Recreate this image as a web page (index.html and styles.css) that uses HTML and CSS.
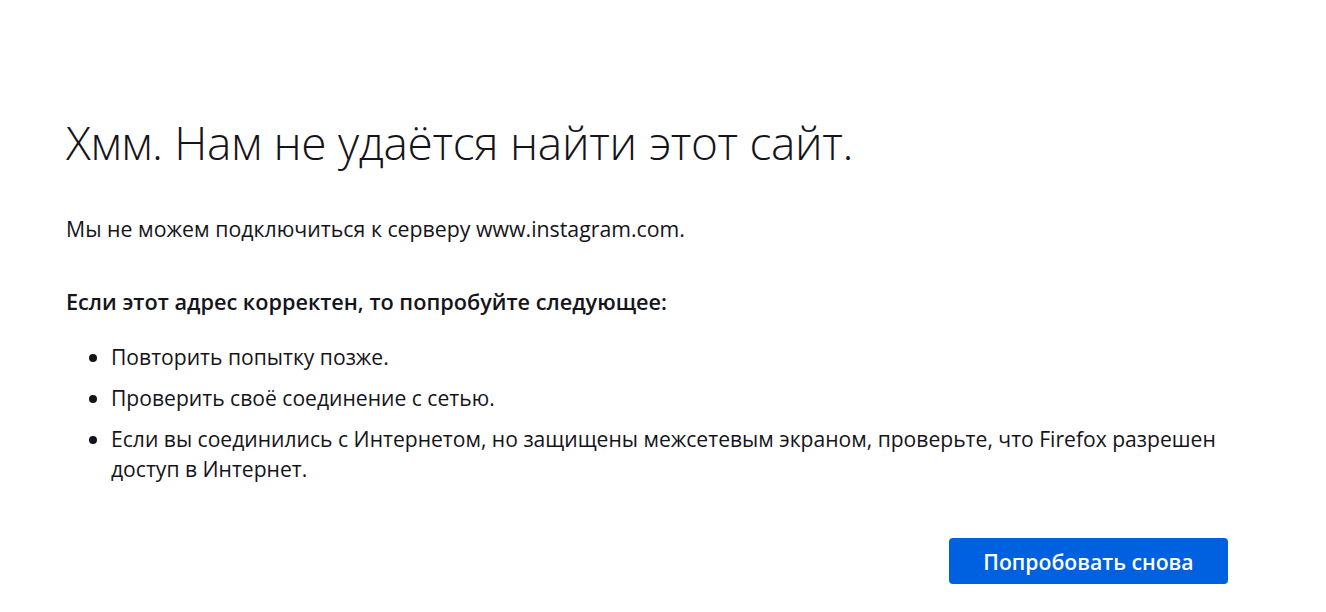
FILE: index.html
```html
<!DOCTYPE html>
<html lang="ru">
<head>
<meta charset="utf-8">
<title>Ошибка</title>
<link rel="stylesheet" href="styles.css">
</head>
<body>
<main class="container">
  <h1 class="title">Хмм. Нам не удаётся найти этот сайт.</h1>
  <p class="intro">Мы не можем подключиться к серверу www.instagram.com.</p>
  <p class="subhead">Если этот адрес корректен, то попробуйте следующее:</p>
  <ul class="tips">
    <li>Повторить попытку позже.</li>
    <li>Проверить своё соединение с сетью.</li>
    <li>Если вы соединились с Интернетом, но защищены межсетевым экраном, проверьте, что Firefox разрешен доступ в Интернет.</li>
  </ul>
  <div class="actions">
    <button class="retry">Попробовать снова</button>
  </div>
</main>
</body>
</html>
```

FILE: styles.css
```css
html, body {
  margin: 0;
  padding: 0;
  background: #ffffff;
}
body {
  font-family: "Open Sans", "Noto Sans", sans-serif;
  color: #15141a;
  font-size: 21.3px;
}
.container {
  width: 1162px;
  padding: 110px 0 0 66px;
}
.title {
  margin: 0;
  font-weight: 300;
  font-size: 46px;
  letter-spacing: -0.3px;
  line-height: 64px;
}
.intro {
  margin: 40px 0 0;
  line-height: 30px;
}
.subhead {
  margin: 43px 0 0;
  font-weight: 600;
  font-size: 21.7px;
  line-height: 30px;
}
.tips {
  margin: 25px 0 0;
  padding-left: 45px;
  font-size: 21.1px;
}
.tips li {
  line-height: 30px;
  margin-bottom: 11px;
}
.tips li:last-child {
  margin-bottom: 0;
}
.actions {
  display: flex;
  justify-content: flex-end;
  margin-top: 54px;
}
.retry {
  font-family: inherit;
  font-size: 21.2px;
  font-weight: 600;
  color: #fff;
  background: #0061e0;
  border: none;
  border-radius: 4px;
  width: 279px;
  height: 46px;
  padding: 0;
}
```
